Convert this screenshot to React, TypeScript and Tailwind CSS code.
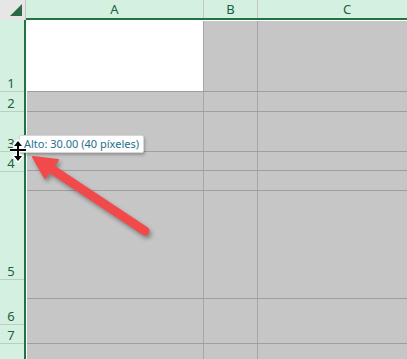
import React from "react";

const headerRows = [
  { label: "1", h: "h-[72px]" },
  { label: "2", h: "h-[20px]" },
  { label: "3", h: "h-[40px]" },
  { label: "4", h: "h-[20px]" },
  { label: "5", h: "h-[108px]" },
  { label: "6", h: "h-[45px]" },
  { label: "7", h: "h-[19px]" },
  { label: "8", h: "h-[40px]" },
];

const gridRows = [
  "h-[71px]",
  "h-[20px]",
  "h-[40px]",
  "h-[19px]",
  "h-[20px]",
  "h-[108px]",
  "h-[45px]",
  "h-[40px]",
];

function ResizeCursor() {
  return (
    <svg className="absolute left-[9px] top-[139px]" width="18" height="24" viewBox="0 0 18 24">
      <g stroke="#fff" strokeWidth="3.5" strokeLinejoin="round" fill="#fff">
        <path d="M9 2 L5 7 L13 7 Z M9 22 L5 17 L13 17 Z" />
        <path d="M9 5 V19 M1 11 H17" fill="none" />
      </g>
      <g fill="#000">
        <path d="M9 2 L5 7 L13 7 Z M9 22 L5 17 L13 17 Z" />
        <rect x="8" y="5" width="2" height="14" />
        <rect x="1" y="10" width="16" height="2" />
      </g>
    </svg>
  );
}

function RedArrow() {
  return (
    <svg
      className="absolute left-0 top-0 drop-shadow-[2px_3px_2px_rgba(0,0,0,0.35)]"
      width="407"
      height="359"
      viewBox="0 0 407 359"
    >
      <line x1="50" y1="168" x2="145" y2="231" stroke="#f24a4a" strokeWidth="9" strokeLinecap="round" />
      <path d="M33 157 L58 160 L45 178 Z" fill="#f24a4a" stroke="#f24a4a" strokeWidth="2" strokeLinejoin="round" />
    </svg>
  );
}

export default function App() {
  return (
    <div
      className="relative w-[407px] h-[359px] overflow-hidden bg-[#c6c6c6]"
      style={{ fontFamily: '"Noto Sans", "Open Sans", sans-serif' }}
    >
      {/* column headers */}
      <div className="flex h-[20px]">
        <div className="relative w-[26px] shrink-0 bg-[#e6e6e6] border-r border-[#c6c6c6]">
          <svg className="absolute left-[10px] top-[4px]" width="12" height="12" viewBox="0 0 12 12">
            <path d="M0 12 L12 12 L12 0 Z" fill="#2b6a47" />
          </svg>
        </div>
        <div className="flex flex-1 bg-[#d3f0e0] border-b-2 border-[#217346] text-[13px] text-[#1e5e3d] leading-[18px]">
          <div className="w-[178px] shrink-0 border-r border-[#c6c6c6] text-center">A</div>
          <div className="w-[54px] shrink-0 border-r border-[#c6c6c6] text-center">B</div>
          <div className="w-[178px] shrink-0 text-center">C</div>
        </div>
      </div>

      {/* body */}
      <div className="flex">
        <div className="w-[26px] shrink-0 flex flex-col bg-[#d3f0e0] border-r-2 border-[#217346] text-[13px] text-[#1e5e3d]">
          {headerRows.map((r) => (
            <div
              key={r.label}
              className={`${r.h} shrink-0 flex items-end justify-center border-b border-[#bccdc3] leading-[16px] pr-[2px]`}
            >
              {r.label}
            </div>
          ))}
        </div>
        <div className="flex-1 flex flex-col border-t border-l border-white">
          {gridRows.map((h, i) => (
            <div key={i} className={`${h} shrink-0 flex border-b border-[#9e9e9e]`}>
              <div className={`w-[177px] shrink-0 border-r border-[#a6a6a6] ${i === 0 ? "bg-white" : "bg-[#c6c6c6]"}`} />
              <div className="w-[54px] shrink-0 border-r border-[#a6a6a6] bg-[#c6c6c6]" />
              <div className="w-[178px] shrink-0 bg-[#c6c6c6]" />
            </div>
          ))}
        </div>
      </div>

      {/* overlays */}
      <RedArrow />
      <div className="absolute left-[19px] top-[135px] h-[18px] px-[4px] bg-white border border-[#d6d6d6] rounded-[2px] shadow-[1px_2px_3px_rgba(0,0,0,0.25)] text-[11px] leading-[16px] text-[#1f6f8c] whitespace-nowrap">
        Alto: 30.00 (40 píxeles)
      </div>
      <ResizeCursor />
    </div>
  );
}
